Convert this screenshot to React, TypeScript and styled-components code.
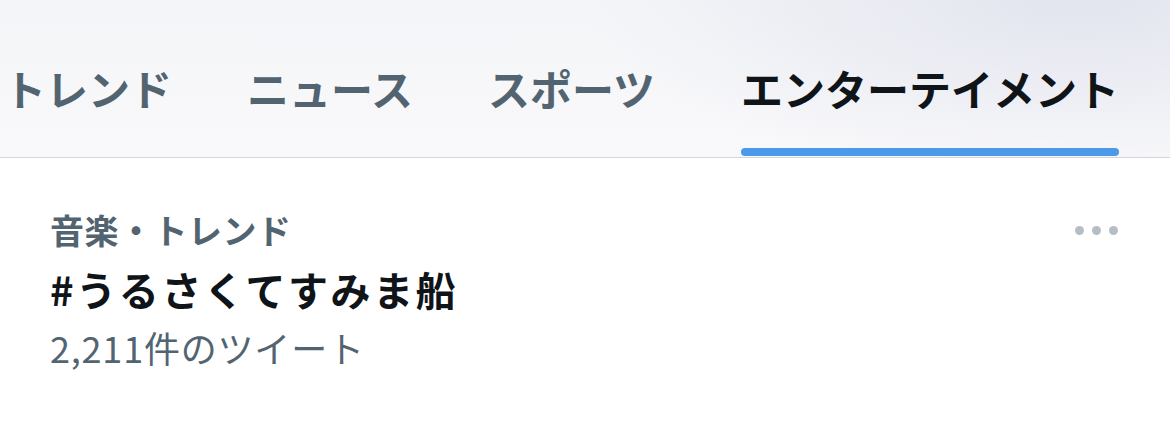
import React from "react";
import styled, { createGlobalStyle } from "styled-components";

const Global = createGlobalStyle`
  html, body { margin: 0; padding: 0; background: #ffffff; }
  body { font-family: "Noto Sans CJK JP", "Noto Sans", sans-serif; -webkit-font-smoothing: antialiased; }
  * { box-sizing: border-box; }
`;

const Page = styled.div`
  width: 1170px;
  height: 439px;
  overflow: hidden;
  background: #ffffff;
`;

const Header = styled.nav`
  height: 158px;
  display: flex;
  gap: 75px;
  padding-left: 4px;
  border-bottom: 1px solid #d3d6d9;
  background:
    radial-gradient(ellipse 700px 260px at 1080px 0px, rgba(226, 228, 238, 0.95), rgba(226, 228, 238, 0) 70%),
    linear-gradient(180deg, #f4f5f8 0%, #f9f9fb 100%);
`;

const Tab = styled.div<{ $extra?: number }>`
  display: flex;
  flex-direction: column;
  height: 100%;
  margin-left: ${(p) => p.$extra ?? 0}px;
`;

const TabLabel = styled.div<{ $active?: boolean }>`
  flex: 1;
  display: flex;
  align-items: center;
  padding-top: 27px;
  font-size: 42px;
  line-height: 1;
  font-weight: 700;
  white-space: nowrap;
  color: ${(p) => (p.$active ? "#0f1419" : "#536471")};
`;

const Indicator = styled.div<{ $active?: boolean }>`
  height: 8px;
  margin-bottom: 1px;
  border-radius: 4px;
  background: ${(p) => (p.$active ? "#4b99e8" : "transparent")};
`;

const Trend = styled.div`
  display: flex;
  justify-content: space-between;
  align-items: flex-start;
  padding: 50px 52px 0 50px;
`;

const TrendBody = styled.div`
  display: flex;
  flex-direction: column;
`;

const Category = styled.div`
  font-size: 34px;
  line-height: 44px;
  font-weight: 600;
  letter-spacing: 0.5px;
  color: #536471;
`;

const Title = styled.div`
  margin-top: 12px;
  font-size: 40px;
  line-height: 50px;
  font-weight: 700;
  letter-spacing: 2.6px;
  color: #0f1419;
`;

const Count = styled.div`
  margin-top: 10px;
  font-size: 36px;
  line-height: 46px;
  font-weight: 400;
  letter-spacing: 0.8px;
  color: #536471;
`;

const More = styled.div`
  display: flex;
  gap: 8px;
  margin-top: 18px;
`;

const Dot = styled.span`
  width: 9px;
  height: 9px;
  border-radius: 50%;
  background: #b5bec6;
`;

const tabs = [
  { label: "トレンド" },
  { label: "ニュース" },
  { label: "スポーツ" },
  { label: "エンターテイメント", active: true, extra: 11 },
];

export default function App() {
  return (
    <Page>
      <Global />
      <Header>
        {tabs.map((t) => (
          <Tab key={t.label} $extra={t.extra}>
            <TabLabel $active={t.active}>{t.label}</TabLabel>
            <Indicator $active={t.active} />
          </Tab>
        ))}
      </Header>
      <Trend>
        <TrendBody>
          <Category>音楽・トレンド</Category>
          <Title>#うるさくてすみま船</Title>
          <Count>2,211件のツイート</Count>
        </TrendBody>
        <More>
          <Dot />
          <Dot />
          <Dot />
        </More>
      </Trend>
    </Page>
  );
}
